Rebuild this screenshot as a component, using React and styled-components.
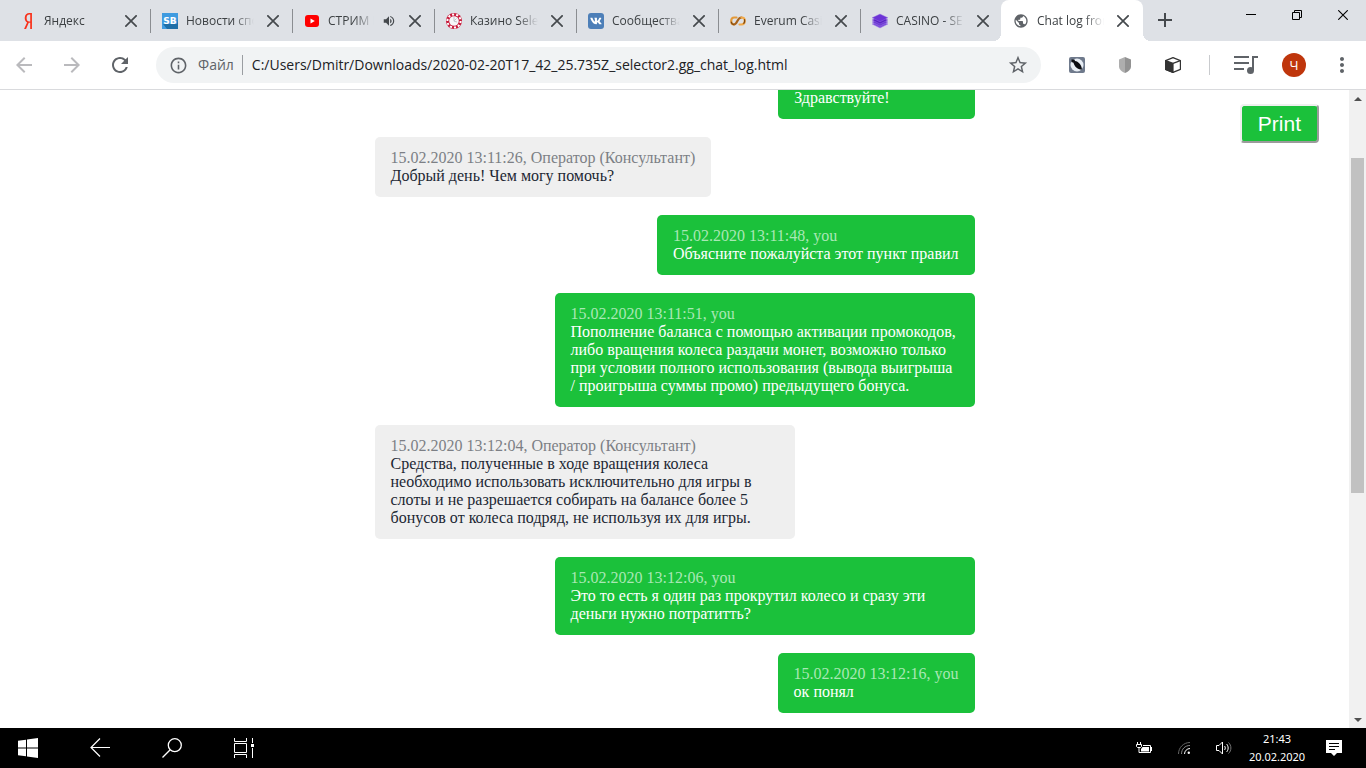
import React from 'react';
import styled, { createGlobalStyle, css } from 'styled-components';
import {
  MdArrowBack,
  MdArrowForward,
  MdRefresh,
  MdInfoOutline,
  MdStarBorder,
  MdMoreVert,
  MdVolumeUp,
  MdPublic,
} from 'react-icons/md';
import { FaVk, FaYandex } from 'react-icons/fa';

const GlobalStyle = createGlobalStyle`
  * {
    box-sizing: border-box;
  }

  body {
    margin: 0;
    background: #ffffff;
    font-family: 'Open Sans', 'Noto Sans', sans-serif;
  }

  button {
    margin: 0;
    padding: 0;
    border: none;
    background: none;
    color: inherit;
    font: inherit;
    cursor: pointer;
  }

  svg {
    display: block;
    flex: none;
  }
`;

const Screen = styled.div`
  display: flex;
  flex-direction: column;
  height: 100vh;
  overflow: hidden;
`;

/* ---------- tabs ---------- */

const TabStrip = styled.div`
  display: flex;
  flex: none;
  height: 41px;
  padding-left: 9px;
  background: #dee1e6;
`;

const TabList = styled.div`
  display: flex;
  min-width: 0;
`;

const activeTab = css`
  position: relative;
  margin-left: -2px;
  padding: 0 12px;
  border-radius: 8px 8px 0 0;
  background: #ffffff;

  &::before,
  &::after {
    content: '';
    position: absolute;
    bottom: 0;
    width: 8px;
    height: 8px;
  }

  &::before {
    right: 100%;
    background: radial-gradient(circle at 0 0, transparent 8px, #ffffff 8px);
  }

  &::after {
    left: 100%;
    background: radial-gradient(circle at 100% 0, transparent 8px, #ffffff 8px);
  }
`;

const Tab = styled.div`
  display: flex;
  align-items: center;
  flex: 0 1 142px;
  width: 142px;
  min-width: 0;
  padding: 0 12px 0 11px;
  color: #45494d;

  ${({ $active }) => $active && activeTab}
`;

const TabButton = styled.button`
  display: flex;
  align-items: center;
  flex: 1;
  gap: 8px;
  min-width: 0;
  height: 100%;
  text-align: left;
`;

const TabTitle = styled.span`
  flex: 1;
  overflow: hidden;
  white-space: nowrap;
  font-size: 12px;
  line-height: 16px;
  color: #3c4043;
  mask-image: linear-gradient(to right, #000 calc(100% - 20px), transparent);
`;

const TabClose = styled.button`
  display: flex;
  align-items: center;
  justify-content: center;
  flex: none;
  width: 16px;
  height: 16px;
  margin-left: 11px;
`;

const TabDivider = styled.span`
  flex: none;
  align-self: center;
  width: 1px;
  height: 24px;
  margin: 0 -12px 0 11px;
  background: #8a8d91;
`;

const NewTab = styled.button`
  display: flex;
  align-items: center;
  justify-content: center;
  width: 28px;
  height: 40px;
  margin-left: 8px;
  color: #45494d;
`;

const WindowControls = styled.div`
  display: flex;
  margin-left: auto;
`;

const WindowButton = styled.button`
  display: flex;
  align-items: center;
  justify-content: center;
  width: 46px;
  height: 29px;
  color: #000000;
`;

/* ---------- toolbar ---------- */

const Toolbar = styled.div`
  display: flex;
  align-items: center;
  flex: none;
  height: 49px;
  border-bottom: 1px solid #d9dadd;
  background: #ffffff;
`;

const ToolButton = styled.button`
  display: flex;
  align-items: center;
  justify-content: center;
  flex: none;
  width: 48px;
  height: 36px;
  color: ${({ $muted }) => ($muted ? '#bababd' : '#5f6368')};
`;

const ToolDivider = styled.span`
  width: 1px;
  height: 20px;
  margin: 0 12px;
  background: #c9cbce;
`;

const Omnibox = styled.div`
  display: flex;
  align-items: center;
  flex: 1;
  height: 36px;
  margin: 0 12px;
  padding: 0 12px 0 13px;
  border-radius: 18px;
  background: #f1f3f4;
  color: #5f6368;
`;

const Scheme = styled.label`
  margin: 0 9px 0 10px;
  padding-right: 8px;
  border-right: 1px solid #9a9da1;
  font-size: 14px;
  line-height: 20px;
`;

const Address = styled.input`
  flex: 1;
  min-width: 0;
  padding: 0;
  border: none;
  outline: none;
  background: none;
  color: #202124;
  font: 14px/20px 'Open Sans', 'Noto Sans', sans-serif;
`;

const Avatar = styled.span`
  display: flex;
  align-items: center;
  justify-content: center;
  width: 24px;
  height: 24px;
  border-radius: 50%;
  background: #bf360c;
  color: #ffffff;
  font-size: 13px;
  line-height: 16px;
`;

/* ---------- page ---------- */

const Viewport = styled.div`
  display: flex;
  flex: 1;
  min-height: 0;
`;

const Page = styled.main`
  display: grid;
  grid-template-columns: 1fr minmax(0, 600px) 1fr;
  grid-template-rows: minmax(0, 1fr);
  flex: 1;
  min-width: 0;
  overflow: hidden;
`;

const Chat = styled.div`
  display: flex;
  flex-direction: column;
  grid-column: 2;
  justify-content: flex-end;
  gap: 18px;
  padding-bottom: 15px;
  font-family: 'Liberation Serif', 'Times New Roman', serif;
  font-size: 16px;
  line-height: 18px;
`;

const Bubble = styled.article`
  flex: none;
  align-self: ${({ $own }) => ($own ? 'flex-end' : 'flex-start')};
  max-width: 70%;
  padding: 12px 16px;
  border-radius: 5px;
  background: ${({ $own }) => ($own ? '#1bc13b' : '#efefef')};
  color: ${({ $own }) => ($own ? '#ffffff' : '#1c2733')};
`;

const BubbleMeta = styled.div`
  color: ${({ $own }) => ($own ? '#a9e8b5' : '#7c7f85')};
`;

const PrintButton = styled.button`
  grid-column: 3;
  justify-self: end;
  align-self: start;
  margin: 14px 30px 0 0;
  padding: 6px 16px;
  border: 2px outset #efefef;
  border-radius: 4px;
  background: #1bc13b;
  color: #ffffff;
  font: 21px/23px 'Liberation Sans', Arial, sans-serif;
`;

const Scrollbar = styled.div`
  display: flex;
  flex-direction: column;
  flex: none;
  width: 17px;
  background: #f1f1f1;
`;

const ScrollArrow = styled.button`
  display: flex;
  align-items: center;
  justify-content: center;
  height: 17px;
  color: #505050;
`;

const ScrollTrack = styled.div`
  flex: 1;
  padding: 51px 2px 0;
`;

const ScrollThumb = styled.div`
  height: 335px;
  background: #c1c1c1;
`;

/* ---------- taskbar ---------- */

const Taskbar = styled.footer`
  display: flex;
  align-items: center;
  flex: none;
  height: 40px;
  padding: 0 8px 0 4px;
  background: #000000;
  color: #ffffff;
`;

const TaskGroup = styled.div`
  display: flex;
  gap: 24px;
`;

const Tray = styled.div`
  display: flex;
  align-items: center;
  margin-left: auto;
`;

const TaskButton = styled.button`
  display: flex;
  align-items: center;
  justify-content: center;
  width: ${({ $small }) => ($small ? '40px' : '48px')};
  height: 40px;
`;

const Clock = styled.button`
  width: 66px;
  font-family: 'Noto Sans', 'Open Sans', sans-serif;
  font-size: 11px;
  line-height: 18px;
  text-align: center;
`;

/* ---------- icons ---------- */

const CrossIcon = ({ size = 12, weight = 2 }) => (
  <svg width={size} height={size} viewBox="0 0 12 12" stroke="currentColor" strokeWidth={weight}>
    <path d="M.3.3l11.4 11.4M11.700.3L.3 11.700" />
  </svg>
);

const SbIcon = () => (
  <svg width="16" height="16" viewBox="0 0 16 16">
    <path fill="#3f9be0" d="M0 0h16v16H0z" />
    <path fill="#1f6fa8" d="M1 11h14l1-6v11H5z" />
    <text x="8" y="11" fill="#fff" fontFamily="DejaVu Sans" fontWeight="700" fontSize="9" textAnchor="middle">SB</text>
  </svg>
);

const YoutubeIcon = () => (
  <svg width="16" height="16" viewBox="0 0 16 16">
    <rect x="1" y="2" width="14" height="12" rx="3" fill="#f00" />
    <path d="M6.5 5.500v5L10.800 8z" fill="#fff" />
  </svg>
);

const ChipIcon = () => (
  <svg width="16" height="16" viewBox="0 0 16 16" fill="none">
    <circle cx="8" cy="8" r="8" fill="#c8193a" />
    <circle cx="8" cy="8" r="6.600" stroke="#fff" strokeWidth="2" strokeDasharray="2.070 2.070" />
    <circle cx="8" cy="8" r="4.800" fill="#f7f7f9" />
    <path d="M8 4v4.200l3 .8M8 8l2.500-2.500" stroke="#c3c5cc" />
  </svg>
);

const VkBadge = styled.span`
  display: flex;
  align-items: center;
  justify-content: center;
  flex: none;
  width: 16px;
  height: 16px;
  border-radius: 3px;
  background: #4d7fb8;
  color: #ffffff;
`;

const VkIcon = () => (
  <VkBadge>
    <FaVk size={12} />
  </VkBadge>
);

const EverumIcon = () => (
  <svg width="16" height="16" viewBox="0 0 16 16" fill="none" strokeWidth="2.200" strokeLinecap="round">
    <path d="M6.500 4.500H4.200C2.200 4.500 1.200 6 1.200 8s1 3.500 2.800 3.500" stroke="#e39a3a" />
    <path d="M4 11.500c3.500 0 3-7 7.500-7" stroke="#a8621a" />
    <path d="M11.500 4.500c2.200 0 3.300 1.400 3.300 3.300 0 2.200-1.300 3.700-3.300 3.700H9.500" stroke="#f0a848" />
    <path d="M14.600 6.500c.3 1.500 0 3-.8 3.900M1.300 9.200c.2 1 .9 1.900 1.900 2.200" stroke="#7a4512" strokeWidth="1.200" />
  </svg>
);

const LayersIcon = () => (
  <svg width="16" height="16" viewBox="0 0 16 16" stroke="#9f7fe8" strokeWidth=".4">
    <path d="M0 11l8-3.500 8 3.500-8 4z" fill="#7d4ddb" />
    <path d="M0 9l8-3.500L16 9l-8 4z" fill="#6c38d2" />
    <path d="M0 7l8-3.500L16 7l-8 4z" fill="#5a22c4" />
    <path d="M0 4.800L8 1l8 3.800-8 4z" fill="#6d34d6" />
  </svg>
);

const RestoreIcon = () => (
  <svg width="10" height="10" viewBox="0 0 10 10" fill="none" stroke="currentColor">
    <path d="M.5 2.500h7v7h-7zM2.500 2.500v-2h7v7h-2" />
  </svg>
);

const QueueIcon = () => (
  <svg width="24" height="20" viewBox="0 0 24 20" fill="none" stroke="currentColor" strokeWidth="2">
    <path d="M0 2h15M0 8h15M0 14h10M24 2h-5v13" />
    <circle cx="16.500" cy="15.500" r="3.500" fill="currentColor" stroke="none" />
  </svg>
);

const RocketIcon = () => (
  <svg width="16" height="16" viewBox="0 0 16 16">
    <rect width="16" height="16" rx="2" fill="#6f7a8c" />
    <circle cx="8" cy="8" r="6.500" fill="#e8eef5" />
    <path d="M2.500 2.500h3l.5 1.500c2 .2 3 1 4.200 2.300 1.600 1.700 2.600 3.700 2.800 6.200-2.200 0-4.500-.8-6-2.300C5.700 8.900 5 7.500 4.500 5.800L2.500 5z" fill="#0b0d12" />
  </svg>
);

const ShieldIcon = () => (
  <svg width="16" height="16" viewBox="0 0 16 16">
    <path d="M8 0l6 2.500v7c0 3-3 5.500-6 6.500z" fill="#929292" />
    <path d="M8 0L2 2.500v7c0 3 3 5.500 6 6.500z" fill="#aeaeae" />
  </svg>
);

const CubeIcon = () => (
  <svg width="16" height="16" viewBox="0 0 16 16" fill="#fff" stroke="#333" strokeWidth="1.200" strokeLinejoin="round">
    <path d="M8 .6l7.400 3v8.800l-7.400 3-7.400-3V3.600z" />
    <path d="M.6 3.600L8 6.400v9l-7.400-3z" fill="#333" />
    <path d="M8 6.400l7.400-2.800" />
  </svg>
);

const WindowsIcon = () => (
  <svg width="20" height="20" viewBox="0 0 20 20" fill="currentColor">
    <path d="M0 2.800l8-1.100v7.800H0zM9 1.500L20 0v9.500H9zM0 10.500h8v7.800l-8-1.100zM9 10.500h11V20L9 18.500z" />
  </svg>
);

const BackIcon = () => (
  <svg width="20" height="20" viewBox="0 0 20 20" fill="none" stroke="currentColor" strokeWidth="1.200">
    <path d="M20 9.500H1M10 .5l-9 9 9 9" />
  </svg>
);

const SearchIcon = () => (
  <svg width="20" height="20" viewBox="0 0 20 20" fill="none" stroke="currentColor" strokeWidth="1.300">
    <circle cx="12.800" cy="7.200" r="6.500" />
    <path d="M8.200 11.800L.5 19.500" />
  </svg>
);

const TaskViewIcon = () => (
  <svg width="20" height="20" viewBox="0 0 20 20" fill="none" stroke="currentColor">
    <path d="M.5 0v3.500h12V0M.5 5.500h12v9H.5zM.5 20v-3.500h12V20M18.500 0v5M18.500 10v10" />
    <path d="M17 6h3v3h-3z" fill="currentColor" stroke="none" />
  </svg>
);

const BatteryIcon = () => (
  <svg width="16" height="12" viewBox="0 0 16 12" fill="none" stroke="currentColor">
    <path d="M1.500 0v2M4.500 0v2M.5 2.500h5v2l-1 1h-3l-1-1zM3 5.500v5M3 10.500h11.500v-7H7M15.500 5v4" />
    <path d="M5 9.500V7l1.500-2H13v4.500z" fill="currentColor" stroke="none" />
  </svg>
);

const WifiIcon = () => (
  <svg width="12" height="12" viewBox="0 0 12 12" fill="none" stroke="currentColor">
    <path d="M.5 12C.5 5.500 5.500.5 12 .5" stroke="#666" />
    <path d="M3.500 12c0-5 3.500-8.500 8.500-8.500" stroke="#888" />
    <path d="M6.500 12c0-3 2.500-5.500 5.500-5.500" />
    <circle cx="10.800" cy="10.800" r="1.200" fill="currentColor" stroke="none" />
  </svg>
);

const SoundIcon = () => (
  <svg width="16" height="14" viewBox="0 0 16 14" fill="none" stroke="currentColor">
    <path d="M.5 4.500H3l3.500-3.500v12L3 9.500H.5zM8.500 5c1 1 1 3 0 4M10.500 3c2.200 2 2.200 6 0 8" />
    <path d="M12.500 1.500c3.200 3 3.200 8 0 11" stroke="#777" />
  </svg>
);

const NoticeIcon = () => (
  <svg width="16" height="16" viewBox="0 0 16 16">
    <path d="M0 0h16v13h-5l-3 3-3-3H0z" fill="currentColor" />
    <path d="M3 3.500h10M3 6.500h10M3 9.500h6" stroke="#000" />
  </svg>
);

const tabs = [
  { title: 'Яндекс', icon: <FaYandex size={16} color="#f8321c" /> },
  { title: 'Новости спорта', icon: <SbIcon /> },
  { title: 'СТРИМ НА', icon: <YoutubeIcon />, audio: true },
  { title: 'Казино Selector', icon: <ChipIcon /> },
  { title: 'Сообщества', icon: <VkIcon /> },
  { title: 'Everum Casino', icon: <EverumIcon /> },
  { title: 'CASINO - SELECTOR', icon: <LayersIcon /> },
  { title: 'Chat log from', icon: <MdPublic size={16} color="#5f6368" />, active: true },
];

const messages = [
  { time: '15.02.2020 13:11:16', own: true, text: 'Здравствуйте!' },
  { time: '15.02.2020 13:11:26', text: 'Добрый день! Чем могу помочь?' },
  { time: '15.02.2020 13:11:48', own: true, text: 'Объясните пожалуйста этот пункт правил' },
  {
    time: '15.02.2020 13:11:51',
    own: true,
    text: 'Пополнение баланса с помощью активации промокодов, либо вращения колеса раздачи монет, возможно только при условии полного использования (вывода выигрыша / проигрыша суммы промо) предыдущего бонуса.',
  },
  {
    time: '15.02.2020 13:12:04',
    text: 'Средства, полученные в ходе вращения колеса необходимо использовать исключительно для игры в слоты и не разрешается собирать на балансе более 5 бонусов от колеса подряд, не используя их для игры.',
  },
  {
    time: '15.02.2020 13:12:06',
    own: true,
    text: 'Это то есть я один раз прокрутил колесо и сразу эти деньги нужно потратитть?',
  },
  { time: '15.02.2020 13:12:16', own: true, text: 'ок понял' },
];

const App = () => (
  <>
    <GlobalStyle />
    <Screen>
      <TabStrip>
        <TabList>
          {tabs.map(({ title, icon, audio, active }, index) => (
            <Tab key={title} $active={active}>
              <TabButton>
                {icon}
                <TabTitle>{title}</TabTitle>
                {audio && <MdVolumeUp size={14} />}
              </TabButton>
              <TabClose aria-label="Закрыть вкладку">
                <CrossIcon weight={1.7} />
              </TabClose>
              {index < tabs.length - 2 && <TabDivider />}
            </Tab>
          ))}
        </TabList>
        <NewTab aria-label="Новая вкладка">
          <svg width="14" height="14" viewBox="0 0 14 14" stroke="currentColor" strokeWidth="2">
            <path d="M7 0v14M0 7h14" />
          </svg>
        </NewTab>
        <WindowControls>
          <WindowButton aria-label="Свернуть">
            <svg width="10" height="10" viewBox="0 0 10 10" stroke="currentColor">
              <path d="M0 4.500h10" />
            </svg>
          </WindowButton>
          <WindowButton aria-label="Восстановить">
            <RestoreIcon />
          </WindowButton>
          <WindowButton aria-label="Закрыть">
            <CrossIcon size={10} weight={1.3} />
          </WindowButton>
        </WindowControls>
      </TabStrip>

      <Toolbar>
        <ToolButton $muted aria-label="Назад">
          <MdArrowBack size={24} />
        </ToolButton>
        <ToolButton $muted aria-label="Вперёд">
          <MdArrowForward size={24} />
        </ToolButton>
        <ToolButton aria-label="Обновить">
          <MdRefresh size={24} />
        </ToolButton>
        <Omnibox>
          <MdInfoOutline size={19} />
          <Scheme htmlFor="address">Файл</Scheme>
          <Address
            id="address"
            defaultValue="C:/Users/Dmitr/Downloads/2020-02-20T17_42_25.735Z_selector2.gg_chat_log.html"
          />
          <MdStarBorder size={22} />
        </Omnibox>
        <ToolButton aria-label="Ракета">
          <RocketIcon />
        </ToolButton>
        <ToolButton aria-label="Защита">
          <ShieldIcon />
        </ToolButton>
        <ToolButton aria-label="Куб">
          <CubeIcon />
        </ToolButton>
        <ToolDivider />
        <ToolButton aria-label="Медиа">
          <QueueIcon />
        </ToolButton>
        <ToolButton aria-label="Профиль">
          <Avatar>Ч</Avatar>
        </ToolButton>
        <ToolButton aria-label="Меню">
          <MdMoreVert size={24} />
        </ToolButton>
      </Toolbar>

      <Viewport>
        <Page>
          <Chat>
            {messages.map(({ time, own, text }) => (
              <Bubble key={time} $own={own}>
                <BubbleMeta $own={own}>
                  {time}, {own ? 'you' : 'Оператор (Консультант)'}
                </BubbleMeta>
                {text}
              </Bubble>
            ))}
          </Chat>
          <PrintButton onClick={() => window.print()}>Print</PrintButton>
        </Page>
        <Scrollbar>
          <ScrollArrow aria-label="Вверх">
            <svg width="8" height="4" viewBox="0 0 8 4" fill="currentColor">
              <path d="M0 4l4-4 4 4z" />
            </svg>
          </ScrollArrow>
          <ScrollTrack>
            <ScrollThumb />
          </ScrollTrack>
          <ScrollArrow aria-label="Вниз">
            <svg width="8" height="4" viewBox="0 0 8 4" fill="currentColor">
              <path d="M0 0l4 4 4-4z" />
            </svg>
          </ScrollArrow>
        </Scrollbar>
      </Viewport>

      <Taskbar>
        <TaskGroup>
          <TaskButton aria-label="Пуск">
            <WindowsIcon />
          </TaskButton>
          <TaskButton aria-label="Назад">
            <BackIcon />
          </TaskButton>
          <TaskButton aria-label="Поиск">
            <SearchIcon />
          </TaskButton>
          <TaskButton aria-label="Представление задач">
            <TaskViewIcon />
          </TaskButton>
        </TaskGroup>
        <Tray>
          <TaskButton $small aria-label="Батарея">
            <BatteryIcon />
          </TaskButton>
          <TaskButton $small aria-label="Сеть">
            <WifiIcon />
          </TaskButton>
          <TaskButton $small aria-label="Звук">
            <SoundIcon />
          </TaskButton>
          <Clock>
            21:43
            <br />
            20.02.2020
          </Clock>
          <TaskButton aria-label="Уведомления">
            <NoticeIcon />
          </TaskButton>
        </Tray>
      </Taskbar>
    </Screen>
  </>
);

export default App;
